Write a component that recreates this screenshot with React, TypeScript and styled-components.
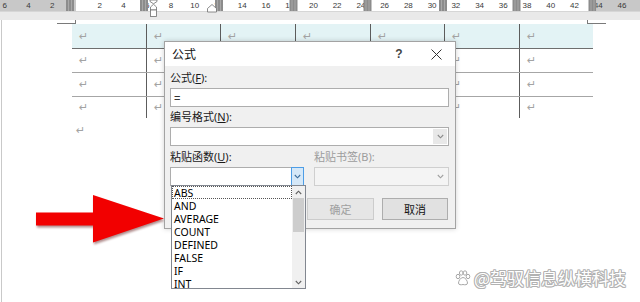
import React from "react";
import styled, { createGlobalStyle } from "styled-components";

const GlobalStyle = createGlobalStyle`
  html, body { margin: 0; padding: 0; background: #fff; }
  body {
    width: 640px; height: 302px; overflow: hidden;
    font-family: "Noto Sans", "Noto Sans CJK SC", sans-serif;
  }
  #root { width: 640px; height: 302px; }
`;

const Screen = styled.div`
  position: relative;
  width: 640px;
  height: 302px;
  display: flex;
  flex-direction: column;
  background: #fff;
  overflow: hidden;
`;

/* ---------- ruler ---------- */
const RulerBar = styled.div`
  flex: none;
  height: 20px;
  background: #e9e9e9;
  svg { display: block; }
`;

const UNIT = 11.87;
const ORIGIN = 76;
const NUMS = [-6, -4, -2, 2, 4, 6, 8, 10, 12, 14, 16, 18, 20, 22, 24, 26, 28, 30, 32, 34, 36, 38, 40, 42, 44, 46];
const MARKERS = [70, 144, 219, 293.5, 367.5, 443, 516.5, 592.5];

const Ruler = () => (
  <RulerBar>
    <svg width="640" height="20" viewBox="0 0 640 20">
      <rect x="0" y="0" width="640" height="11" fill="#c8c8c8" />
      <rect x="76" y="0" width="521" height="11" fill="#ffffff" />
      <line x1="0" y1="11.5" x2="640" y2="11.5" stroke="#d6d6d6" />
      {NUMS.map((n) => (
        <text
          key={n}
          x={ORIGIN + n * UNIT}
          y="8.3"
          fontSize="8"
          textAnchor="middle"
          fill="#3a3a3a"
          fontFamily="Liberation Sans, sans-serif"
        >
          {Math.abs(n)}
        </text>
      ))}
      {MARKERS.map((c) => (
        <g key={c}>
          <rect x={c - 4} y="0" width="8" height="11" fill="#8c8c8c" />
          <line x1={c - 1.5} y1="0" x2={c - 1.5} y2="11" stroke="#a8a8a8" strokeWidth="1" />
          <line x1={c + 1.5} y1="0" x2={c + 1.5} y2="11" stroke="#a8a8a8" strokeWidth="1" />
        </g>
      ))}
      {/* first-line / hanging indent */}
      <polygon points="150,0 157,0 157,1.5 153.5,3.8 150,1.5" fill="#fff" stroke="#6f6f6f" strokeWidth="0.8" />
      <polygon points="150.5,10 150.5,7 153.5,4.3 156.5,7 156.5,10" fill="#fff" stroke="#6f6f6f" strokeWidth="0.8" />
      <rect x="150.5" y="10" width="6" height="6.5" fill="#fff" stroke="#6f6f6f" strokeWidth="0.8" />
      {/* right indent */}
      <polygon points="207.5,12 207.5,8.5 212,4.5 216.5,8.5 216.5,12" fill="#fff" stroke="#6f6f6f" strokeWidth="0.8" />
    </svg>
  </RulerBar>
);

/* ---------- page ---------- */
const Page = styled.div`
  flex: 1;
  margin-left: 1px;
  border-left: 1px solid #c9c9c9;
  display: flex;
  flex-direction: column;
  background: #fff;
`;

const CornerRow = styled.div`
  display: flex;
  height: 4px;
  flex: none;
`;

const CornerMark = styled.span<{ $side: "left" | "right"; $offset: number }>`
  display: block;
  box-sizing: border-box;
  width: 19px;
  height: 4px;
  margin-left: ${(p) => p.$offset}px;
  border-bottom: 1px solid #7a7a7a;
  ${(p) => (p.$side === "left" ? "border-right: 1px solid #7a7a7a;" : "border-left: 1px solid #7a7a7a;")}
`;

const COLS = [75, 74, 75, 75, 74, 75, 73];

const Table = styled.div`
  margin-left: 70px;
  width: 521px;
  display: flex;
  flex-direction: column;
`;

const TableRow = styled.div<{ $header?: boolean; $height: number; $line?: "dark" | "light" | "none" }>`
  display: grid;
  grid-template-columns: ${COLS.map((c) => `${c}px`).join(" ")};
  box-sizing: border-box;
  height: ${(p) => p.$height}px;
  background: ${(p) => (p.$header ? "#e3f3f5" : "transparent")};
  border-bottom: ${(p) =>
    p.$line === "dark" ? "1px solid #6e6e6e" : p.$line === "light" ? "1px solid #a6a6a6" : "none"};
`;

const Cell = styled.div<{ $last?: boolean }>`
  box-sizing: border-box;
  display: flex;
  align-items: center;
  padding-left: 7px;
  border-right: ${(p) => (p.$last ? "none" : "1px solid #5c5c5c")};
`;

const Mark = styled.span`
  font-family: "DejaVu Sans", sans-serif;
  font-size: 11px;
  line-height: 1;
  color: #a3a3a3;
`;

const Para = styled.div`
  margin-left: 74px;
  height: 24px;
  display: flex;
  align-items: center;
`;

const ROWS: { h: number; header?: boolean; line: "dark" | "light" | "none" }[] = [
  { h: 25, header: true, line: "dark" },
  { h: 24, line: "light" },
  { h: 24, line: "light" },
  { h: 21, line: "none" },
];

/* ---------- dialog ---------- */
const Dialog = styled.div`
  position: absolute;
  left: 164px;
  top: 41px;
  width: 292px;
  box-sizing: border-box;
  border: 1px solid #a3a3a3;
  box-shadow: 0 0 5px rgba(0, 0, 0, 0.18);
  background: #f0f0f0;
  display: flex;
  flex-direction: column;
  font-family: "Noto Sans", "Noto Sans CJK SC", sans-serif;
  z-index: 1;
`;

const TitleBar = styled.div`
  height: 24px;
  background: #fff;
  display: flex;
  align-items: center;
  padding: 0 9px 0 7px;
`;

const Title = styled.div`
  flex: 1;
  font-size: 12px;
  color: #111;
`;

const TitleButton = styled.div<{ $gap?: number }>`
  width: 20px;
  height: 20px;
  display: flex;
  align-items: center;
  justify-content: center;
  margin-left: ${(p) => p.$gap ?? 0}px;
  font-family: "Liberation Sans", sans-serif;
  font-size: 12px;
  font-weight: bold;
  color: #444;
`;

const Body = styled.div`
  padding: 4px 6px 8px 5px;
  display: flex;
  flex-direction: column;
`;

const Label = styled.div<{ $disabled?: boolean; $gap?: number }>`
  height: 16px;
  line-height: 16px;
  font-size: 11px;
  margin-top: ${(p) => p.$gap ?? 0}px;
  color: ${(p) => (p.$disabled ? "#9c9c9c" : "#1a1a1a")};
  white-space: nowrap;
  u { text-decoration: underline; text-underline-offset: 1px; }
`;

const TextInput = styled.div`
  margin-top: 2px;
  height: 19px;
  box-sizing: border-box;
  border: 1px solid #adadad;
  background: #fff;
  display: flex;
  align-items: center;
  padding-left: 3px;
  font-family: "Liberation Sans", sans-serif;
  font-size: 11px;
  color: #333;
`;

const Combo = styled.div<{ $disabled?: boolean }>`
  position: relative;
  margin-top: 2px;
  height: 19px;
  box-sizing: border-box;
  border: 1px solid ${(p) => (p.$disabled ? "#cfcfcf" : "#adadad")};
  background: ${(p) => (p.$disabled ? "#f4f4f4" : "#fff")};
  display: flex;
  justify-content: flex-end;
`;

const ComboButton = styled.div<{ $variant: "plain" | "active" | "disabled" }>`
  width: ${(p) => (p.$variant === "active" ? 13 : 14)}px;
  box-sizing: border-box;
  display: flex;
  align-items: center;
  justify-content: center;
  ${(p) =>
    p.$variant === "active"
      ? "background: #d5e8f8; border: 1px solid #4d9de6; margin: -1px -1px -1px 0;"
      : p.$variant === "disabled"
      ? "background: #f4f4f4; margin: 1px;"
      : "background: #e8e8e8; margin: 1px;"}
`;

const Chevron = ({ color = "#606060", up = false }: { color?: string; up?: boolean }) => (
  <svg width="7" height="5" viewBox="0 0 7 5">
    <polyline
      points={up ? "0.8,4 3.5,1.2 6.2,4" : "0.8,1 3.5,3.8 6.2,1"}
      fill="none"
      stroke={color}
      strokeWidth="1.1"
    />
  </svg>
);

const PasteGrid = styled.div`
  display: grid;
  grid-template-columns: 134px 1fr;
  column-gap: 3px;
  margin-top: 3px;
`;

const Column = styled.div<{ $indent?: number }>`
  display: flex;
  flex-direction: column;
  position: relative;
  & > ${Label}, & > ${Combo} { margin-left: ${(p) => p.$indent ?? 0}px; }
`;

const ButtonRow = styled.div`
  display: flex;
  gap: 8px;
  margin-top: 12px;
`;

const Button = styled.div<{ $disabled?: boolean; $width: number }>`
  width: ${(p) => p.$width}px;
  height: 22px;
  box-sizing: border-box;
  display: flex;
  align-items: center;
  justify-content: center;
  font-size: 11px;
  background: ${(p) => (p.$disabled ? "#e6e6e6" : "#e1e1e1")};
  border: 1px solid ${(p) => (p.$disabled ? "#cccccc" : "#adadad")};
  color: ${(p) => (p.$disabled ? "#a0a0a0" : "#111")};
`;

/* ---------- dropdown list ---------- */
const ListBox = styled.div`
  position: absolute;
  left: 0;
  top: 100%;
  width: 135px;
  height: 104px;
  box-sizing: border-box;
  border: 1px solid #828790;
  background: #fff;
  display: flex;
  z-index: 2;
`;

const Items = styled.div`
  flex: 1;
  display: flex;
  flex-direction: column;
`;

const Item = styled.div<{ $focused?: boolean }>`
  height: 13px;
  box-sizing: border-box;
  line-height: 12px;
  padding-left: 1px;
  font-family: "Noto Sans", sans-serif;
  font-size: 10.5px;
  color: #000;
  border: 1px ${(p) => (p.$focused ? "dotted #555" : "solid transparent")};
  white-space: nowrap;
`;

const ScrollBar = styled.div`
  width: 13px;
  background: #f0f0f0;
  display: flex;
  flex-direction: column;
  align-items: center;
`;

const ScrollArrow = styled.div`
  height: 12px;
  width: 13px;
  display: flex;
  align-items: center;
  justify-content: center;
`;

const ScrollThumb = styled.div`
  width: 11px;
  height: 34px;
  background: #cdcdcd;
`;

const ScrollTrack = styled.div`
  flex: 1;
`;

const FUNCS = ["ABS", "AND", "AVERAGE", "COUNT", "DEFINED", "FALSE", "IF", "INT"];

/* ---------- overlays ---------- */
const ArrowSvg = styled.svg`
  position: absolute;
  left: 0;
  top: 0;
  pointer-events: none;
  filter: drop-shadow(1px 2px 1.2px rgba(80, 0, 0, 0.45));
`;

const Watermark = styled.div`
  position: absolute;
  right: 14px;
  top: 268px;
  display: flex;
  align-items: center;
  gap: 3px;
  font-family: "Noto Sans CJK SC", sans-serif;
  font-size: 17px;
  line-height: 20px;
  color: #fff;
  text-shadow: 1px 0 0 #b2b2b2, -1px 0 0 #b2b2b2, 0 1px 0 #b2b2b2, 0 -1px 0 #b2b2b2,
    0.7px 0.7px 0 #b2b2b2, -0.7px -0.7px 0 #b2b2b2, 0.7px -0.7px 0 #b2b2b2, -0.7px 0.7px 0 #b2b2b2;
`;

const Paw = () => (
  <svg width="16" height="16" viewBox="0 0 16 16">
    <g fill="#fff" stroke="#a8a8a8" strokeWidth="1">
      <ellipse cx="3" cy="6.5" rx="1.8" ry="2.2" />
      <ellipse cx="6.2" cy="3" rx="1.8" ry="2.2" />
      <ellipse cx="10" cy="3" rx="1.8" ry="2.2" />
      <ellipse cx="13" cy="6.5" rx="1.8" ry="2.2" />
      <path d="M8 7.5 C5.5 7.5 3.5 11 3.5 13 C3.5 15 6 15 8 14.5 C10 15 12.5 15 12.5 13 C12.5 11 10.5 7.5 8 7.5 Z" />
    </g>
  </svg>
);

// Columns whose paragraph marks are fully hidden behind the dialog are not rendered
// in rows 2-4 (x 164-455 is covered); the header row marks above the dialog stay visible.
const hiddenUnderDialog = (ri: number, ci: number) => ri > 0 && ci >= 2 && ci <= 4;

export default function App() {
  return (
    <Screen>
      <GlobalStyle />
      <Ruler />
      <Page>
        <CornerRow>
          <CornerMark $side="left" $offset={55} />
          <CornerMark $side="right" $offset={511} />
        </CornerRow>
        <Table>
          {ROWS.map((r, ri) => (
            <TableRow key={ri} $header={r.header} $height={r.h} $line={r.line}>
              {COLS.map((_, ci) => (
                <Cell key={ci} $last={ci === COLS.length - 1}>
                  {!hiddenUnderDialog(ri, ci) && <Mark>↵</Mark>}
                </Cell>
              ))}
            </TableRow>
          ))}
        </Table>
        <Para>
          <Mark>↵</Mark>
        </Para>
      </Page>

      <ArrowSvg width="640" height="302" viewBox="0 0 640 302">
        <polygon
          points="36,212.5 93,212.5 93,195 164,218.5 93,242.5 93,225.5 36,225.5"
          fill="#f20000"
        />
      </ArrowSvg>

      <Dialog>
        <TitleBar>
          <Title>公式</Title>
          <TitleButton>?</TitleButton>
          <TitleButton $gap={17}>
            <svg width="11" height="11" viewBox="0 0 11 11">
              <path d="M0.5 0.5 L10.5 10.5 M10.5 0.5 L0.5 10.5" stroke="#333" strokeWidth="1" />
            </svg>
          </TitleButton>
        </TitleBar>
        <Body>
          <Label>
            公式(<u>F</u>):
          </Label>
          <TextInput>=</TextInput>
          <Label $gap={2}>
            编号格式(<u>N</u>):
          </Label>
          <Combo>
            <ComboButton $variant="plain">
              <Chevron color="#8a8a8a" />
            </ComboButton>
          </Combo>
          <PasteGrid>
            <Column>
              <Label>
                粘贴函数(<u>U</u>):
              </Label>
              <Combo>
                <ComboButton $variant="active">
                  <Chevron color="#3c6e9c" />
                </ComboButton>
                <ListBox>
                  <Items>
                    {FUNCS.map((f, i) => (
                      <Item key={f} $focused={i === 0}>
                        {f}
                      </Item>
                    ))}
                  </Items>
                  <ScrollBar>
                    <ScrollArrow>
                      <Chevron up color="#606060" />
                    </ScrollArrow>
                    <ScrollThumb />
                    <ScrollTrack />
                    <ScrollArrow>
                      <Chevron color="#606060" />
                    </ScrollArrow>
                  </ScrollBar>
                </ListBox>
              </Combo>
            </Column>
            <Column $indent={7}>
              <Label $disabled>粘贴书签(B):</Label>
              <Combo $disabled>
                <ComboButton $variant="disabled">
                  <Chevron color="#a0a0a0" />
                </ComboButton>
              </Combo>
              <ButtonRow>
                <Button $disabled $width={67}>
                  确定
                </Button>
                <Button $width={66}>取消</Button>
              </ButtonRow>
            </Column>
          </PasteGrid>
        </Body>
      </Dialog>

      <Watermark>
        <Paw />
        <span>@驾驭信息纵横科技</span>
      </Watermark>
    </Screen>
  );
}
